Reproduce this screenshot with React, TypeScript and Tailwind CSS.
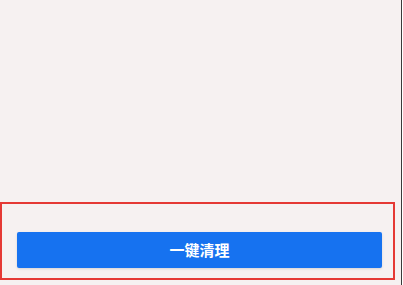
export default function App() {
  return (
    <div className="flex h-[285px] w-[403px] bg-white" style={{ fontFamily: '"Noto Sans CJK SC", "Noto Sans", sans-serif' }}>
      <div className="flex w-[401px] flex-col bg-[#f6f1f1]">
        <div className="flex-1" />
        {/* highlighted action area */}
        <div className="mb-[5px] h-[78px] w-[395px] border-2 border-[#e53935] pt-[28px] pl-[15px] pr-[11px]">
          <button className="flex h-[36px] w-full items-center justify-center rounded-[2px] bg-[#1672f0] text-[15px] font-bold text-white shadow-sm">
            一键清理
          </button>
        </div>
      </div>
      <div className="w-[1px] bg-[#3a3a3a]" />
      <div className="w-[1px] bg-white" />
    </div>
  )
}
